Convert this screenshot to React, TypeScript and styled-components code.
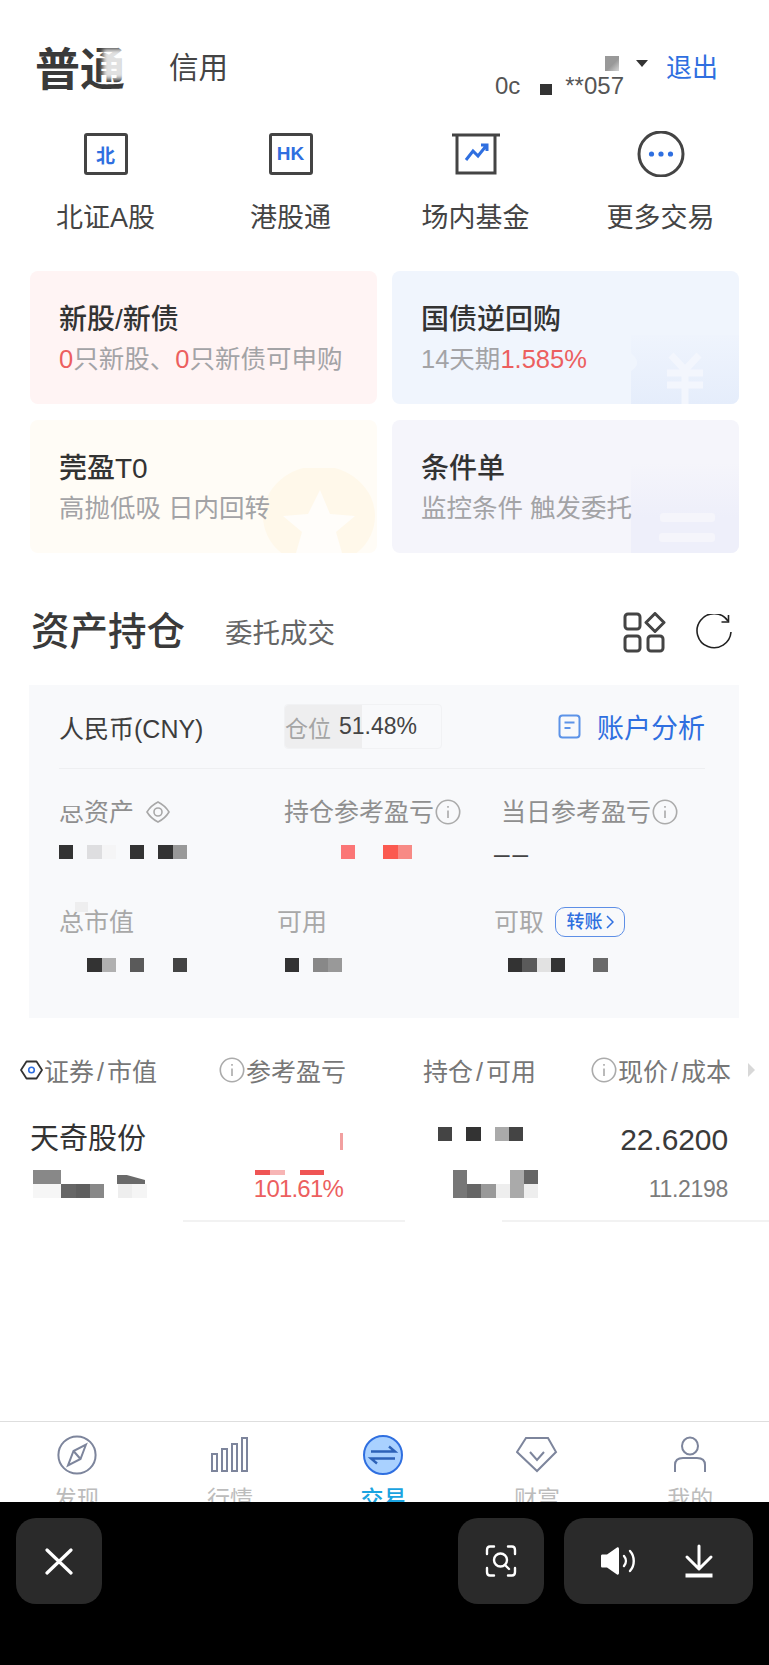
import styled, { createGlobalStyle } from "styled-components";

const GlobalStyle = createGlobalStyle`
  html, body {
    margin: 0;
    padding: 0;
    background: #fff;
  }
  body {
    font-family: "Liberation Sans", "Noto Sans CJK SC", sans-serif;
  }
`;

const Page = styled.div`
  width: 769px;
  height: 1665px;
  display: flex;
  flex-direction: column;
  overflow: hidden;
  background: #fff;
  color: #333;
`;

/* header */
const Header = styled.header`
  display: flex;
  align-items: flex-start;
  height: 131px;
  padding: 42px 51px 0 35px;
  box-sizing: border-box;
`;

const ActiveTab = styled.div`
  position: relative;
  margin-top: 3px;
  font-size: 45px;
  line-height: 52px;
  font-weight: 700;
  color: #3a3a3a;
`;

const TabSmudge = styled.span`
  position: absolute;
  left: 68px;
  top: 4px;
  width: 22px;
  height: 30px;
  background: rgba(255, 255, 255, 0.85);
  filter: blur(2px);
`;

const PlainTab = styled.div`
  margin-left: 44px;
  font-size: 29.5px;
  line-height: 52px;
  color: #444;
`;

const Account = styled.div`
  margin-left: auto;
  margin-top: 13px;
  display: flex;
  flex-direction: column;
  align-items: flex-end;
`;

const AccountName = styled.div`
  display: flex;
  align-items: center;
  gap: 17px;
  height: 16px;
`;

const NameMask = styled.span`
  width: 14px;
  height: 15px;
  background: linear-gradient(135deg, #999 55%, #d5d5d5);
`;

const Caret = styled.span`
  width: 0;
  height: 0;
  border-left: 6px solid transparent;
  border-right: 6px solid transparent;
  border-top: 7px solid #333;
`;

const AccountNo = styled.div`
  display: flex;
  align-items: center;
  margin: 4px 24px 0 0;
  font-size: 24px;
  line-height: 22px;
  color: #555;
`;

const NoMask = styled.span`
  width: 12px;
  height: 11px;
  margin: 6px 13px 0 20px;
  background: #333;
`;

const Logout = styled.div`
  margin-left: 18px;
  font-size: 26px;
  line-height: 52px;
  color: #2f6fe0;
`;

/* shortcuts */
const Shortcuts = styled.nav`
  display: grid;
  grid-template-columns: repeat(4, 185px);
  padding-left: 13px;
`;

const Shortcut = styled.div`
  display: flex;
  flex-direction: column;
  align-items: center;
`;

const IconSlot = styled.div`
  height: 46px;
  display: flex;
  align-items: center;
  justify-content: center;
`;

const BoxIcon = styled.div`
  width: 44px;
  height: 42px;
  box-sizing: border-box;
  border: 3px solid #444;
  border-radius: 3px;
  display: flex;
  align-items: center;
  justify-content: center;
  font-size: 19px;
  font-weight: 700;
  color: #2f6fe0;
`;

const ShortcutLabel = styled.div`
  margin-top: 26px;
  font-size: 27px;
  line-height: 30px;
  color: #444;
`;

/* entry cards */
const Cards = styled.section`
  display: grid;
  grid-template-columns: 347px 347px;
  grid-auto-rows: 133px;
  gap: 16px 15px;
  margin-top: 38px;
  padding-left: 30px;
`;

const Card = styled.div<{ $bg: string }>`
  position: relative;
  overflow: hidden;
  padding: 31px 0 0 29px;
  border-radius: 8px;
  background: ${(p) => p.$bg};
`;

const CardTitle = styled.div`
  position: relative;
  font-size: 28px;
  line-height: 36px;
  font-weight: 500;
  color: #333;
`;

const CardSub = styled.div`
  position: relative;
  margin-top: 4px;
  font-size: 25.5px;
  line-height: 34px;
  color: #a3a3a6;
`;

const Red = styled.span`
  color: #ec5f5f;
`;

const CardArt = styled.svg`
  position: absolute;
  right: 0;
  bottom: 0;
`;

/* holdings head */
const SectionHead = styled.div`
  display: flex;
  align-items: center;
  height: 48px;
  margin-top: 55px;
  padding: 0 36px 0 31px;
`;

const SectionTitle = styled.h2`
  margin: 0;
  font-size: 38.5px;
  line-height: 48px;
  font-weight: 500;
  color: #3a3a3a;
`;

const SectionLink = styled.div`
  margin: -2px 0 0 40px;
  font-size: 27.5px;
  color: #666;
`;

const SectionTools = styled.div`
  margin-left: auto;
  display: flex;
  align-items: center;
  gap: 29px;
`;

/* asset panel */
const Panel = styled.section`
  width: 710px;
  height: 333px;
  margin: 29px 0 0 29px;
  padding: 0 34px 0 30px;
  box-sizing: border-box;
  background: #f8f9fb;
`;

const PanelTop = styled.div`
  display: flex;
  align-items: center;
  height: 84px;
  border-bottom: 1px solid #eeeff1;
  box-sizing: border-box;
`;

const Currency = styled.div`
  width: 225px;
  font-size: 25px;
  color: #3d3d3d;
`;

const Position = styled.div`
  position: relative;
  width: 158px;
  height: 45px;
  box-sizing: border-box;
  border: 1px solid #f1f2f4;
  border-radius: 4px;
  display: flex;
  align-items: center;
  gap: 8px;
  font-size: 23px;
  color: #444;
`;

const PositionFill = styled.span`
  position: absolute;
  left: 0;
  top: 0;
  bottom: 0;
  border-radius: 4px 0 0 4px;
  background: #eeeeef;
`;

const PositionText = styled.span<{ $muted?: boolean }>`
  position: relative;
  color: ${(p) => (p.$muted ? "#a5a5a5" : "#444")};
`;

const Analysis = styled.div`
  margin-left: auto;
  display: flex;
  align-items: center;
  gap: 16px;
  font-size: 27px;
  color: #2f6fe0;
`;

const MetricRow = styled.div<{ $cols: string; $top: number }>`
  display: grid;
  grid-template-columns: ${(p) => p.$cols};
  margin-top: ${(p) => p.$top}px;
`;

const Metric = styled.div<{ $gap: number }>`
  display: flex;
  flex-direction: column;
  gap: ${(p) => p.$gap}px;
`;

const MetricLabel = styled.div<{ $light?: boolean }>`
  position: relative;
  display: flex;
  align-items: center;
  height: 30px;
  font-size: 25px;
  line-height: 30px;
  white-space: nowrap;
  color: ${(p) => (p.$light ? "#a8a8a8" : "#8f8f8f")};
`;

const LabelSmear = styled.span`
  position: absolute;
  left: 0;
  top: 0;
  width: 26px;
  height: 9px;
  background: #f8f9fb;
`;

const LabelMark = styled.span`
  position: absolute;
  left: 16px;
  top: -5px;
  width: 13px;
  height: 10px;
  background: #eeeeef;
`;

const Dash = styled.div`
  height: 14px;
  margin-left: -7px;
  font-size: 28px;
  line-height: 18px;
  letter-spacing: 3px;
  color: #444;
`;

const TransferTag = styled.span`
  display: flex;
  align-items: center;
  justify-content: center;
  gap: 3px;
  width: 70px;
  height: 30px;
  margin-left: 11px;
  box-sizing: border-box;
  border: 1.5px solid #5e8fe6;
  border-radius: 10px;
  font-size: 18px;
  font-weight: 500;
  color: #2f6fe0;
`;

/* pixelated privacy blocks */
const MosaicRow = styled.div<{ $offset?: number }>`
  display: flex;
  height: 14px;
  margin-left: ${(p) => p.$offset ?? 0}px;
`;

const MosaicCell = styled.span<{ $color: string }>`
  flex: none;
  width: 14.2px;
  height: 14px;
  background: ${(p) => p.$color};
`;

const Mosaic = ({ cells, offset }: { cells: string[]; offset?: number }) => (
  <MosaicRow $offset={offset}>
    {cells.map((c, i) => (
      <MosaicCell key={i} $color={c || "transparent"} />
    ))}
  </MosaicRow>
);

const MosaicWedge = styled.span`
  position: absolute;
  left: 87px;
  top: 5px;
  width: 28px;
  height: 9px;
  background: #6a6a6a;
  clip-path: polygon(0 0, 35% 0, 100% 55%, 100% 100%, 0 100%);
`;

/* holdings table */
const TableHead = styled.div`
  display: grid;
  grid-template-columns: 198px 205px 167px 158px 1fr;
  align-items: center;
  height: 40px;
  margin-top: 32px;
  padding-left: 20px;
  font-size: 25px;
  color: #777;
`;

const HeadCell = styled.div`
  display: flex;
  align-items: center;
  gap: 1px;
  white-space: nowrap;
`;

const HeadSlash = styled.span`
  margin: 0 3px;
`;

const MoreArrow = styled.span`
  width: 0;
  height: 0;
  border-top: 7px solid transparent;
  border-bottom: 7px solid transparent;
  border-left: 7px solid #d8d8d8;
`;

const HoldingRow = styled.div`
  display: grid;
  grid-template-columns: 188px 125px 247px 138px;
  margin-top: 28px;
  padding-left: 30px;
`;

const HoldingCell = styled.div<{ $right?: boolean }>`
  display: flex;
  flex-direction: column;
  align-items: ${(p) => (p.$right ? "flex-end" : "stretch")};
`;

const TopLine = styled.div<{ $up?: number; $down?: number }>`
  display: flex;
  align-items: center;
  height: 40px;
  box-sizing: border-box;
  padding-bottom: ${(p) => p.$up ?? 0}px;
  padding-top: ${(p) => p.$down ?? 0}px;
  margin-bottom: 12px;
`;

const BottomLine = styled.div`
  position: relative;
  height: 28px;
`;

const StockName = styled.div`
  font-size: 29px;
  color: #333;
`;

const PriceNow = styled.div`
  font-size: 30px;
  letter-spacing: -0.1px;
  color: #3a3a3a;
`;

const PriceCost = styled.div`
  font-size: 23px;
  line-height: 28px;
  padding-top: 5px;
  letter-spacing: -0.3px;
  color: #7c7c7c;
`;

const PnlPercent = styled.div`
  font-size: 24px;
  line-height: 28px;
  padding-top: 5px;
  letter-spacing: -0.8px;
  color: #ec5f5f;
`;

const PnlSliver = styled.span`
  align-self: flex-start;
  width: 3px;
  height: 17px;
  margin-top: 15px;
  background: #f2a0a0;
`;

const PnlBits = styled.div`
  position: absolute;
  right: 19px;
  top: 0;
  display: flex;
  gap: 15px;
`;

const PnlBit = styled.span<{ $w: number; $soft?: boolean }>`
  width: ${(p) => p.$w}px;
  height: 5px;
  background: ${(p) => (p.$soft ? "linear-gradient(90deg, #ef5555 50%, #f7b5b5 50%)" : "#ef5555")};
`;

const HoldingMosaic = styled.div`
  padding-left: 82px;
`;

const RowRule = styled.div`
  display: flex;
  gap: 97px;
  margin-top: 22px;
  padding-left: 183px;
`;

const RuleSegment = styled.span<{ $w: string }>`
  width: ${(p) => p.$w};
  height: 2px;
  background: #f2f2f2;
`;

/* tab bar */
const TabBar = styled.nav`
  margin-top: auto;
  display: grid;
  grid-template-columns: repeat(5, 1fr);
  height: 81px;
  box-sizing: border-box;
  padding-right: 2px;
  border-top: 1.5px solid #dedede;
  overflow: hidden;
`;

const TabItem = styled.div`
  display: flex;
  flex-direction: column;
  align-items: center;
  padding-top: 13px;
`;

const TabLabel = styled.div<{ $active?: boolean }>`
  margin-top: 9px;
  font-size: 23px;
  line-height: 30px;
  color: ${(p) => (p.$active ? "#1aa3e0" : "#bcbcbc")};
  font-weight: ${(p) => (p.$active ? 500 : 400)};
`;

/* black recorder strip */
const RecorderBar = styled.div`
  display: flex;
  height: 163px;
  flex: none;
  box-sizing: border-box;
  padding: 16px 16px 0;
  background: #000;
`;

const RecorderBtn = styled.div<{ $push?: boolean }>`
  width: 86px;
  height: 86px;
  margin-left: ${(p) => (p.$push ? "auto" : "0")};
  border-radius: 20px;
  background: #2a2a2a;
  display: flex;
  align-items: center;
  justify-content: center;
`;

const RecorderGroup = styled.div`
  width: 189px;
  height: 86px;
  margin-left: 20px;
  box-sizing: border-box;
  padding-left: 36px;
  border-radius: 20px;
  background: #2a2a2a;
  display: flex;
  align-items: center;
  gap: 48px;
`;

const InfoIcon = ({ size = 26 }: { size?: number }) => (
  <svg width={size} height={size} viewBox="0 0 24 24" fill="none" stroke="#ababab" strokeWidth="1.5" style={{ flex: "none", marginLeft: 1 }}>
    <circle cx="12" cy="12" r="10.8" />
    <path d="M12 10.5v7M12 6.5v1.6" />
  </svg>
);

const TabIcon = ({ children }: { children: React.ReactNode }) => (
  <svg width="42" height="40" viewBox="0 0 42 40" fill="none" stroke="#7d859c" strokeWidth="2">
    {children}
  </svg>
);

const tabs = [
  {
    label: "发现",
    icon: (
      <TabIcon>
        <circle cx="21" cy="20" r="18.6" />
        <path d="M30 9.5 24.5 24 12 30.5 17.5 16Z" />
        <path d="M17.5 16 24.5 24" />
      </TabIcon>
    ),
  },
  {
    label: "行情",
    icon: (
      <TabIcon>
        <rect x="3" y="19" width="5" height="17" />
        <rect x="13" y="14" width="5" height="22" />
        <rect x="23" y="9" width="5" height="27" />
        <rect x="33" y="3" width="5" height="33" />
      </TabIcon>
    ),
  },
  {
    label: "交易",
    active: true,
    icon: (
      <svg width="42" height="40" viewBox="0 0 42 40" fill="none">
        <circle cx="21" cy="20" r="19" fill="#a9d1ff" stroke="#2f6fe0" strokeWidth="2" />
        <path d="M9 16.5h24l-6-5M33 23.5H9l6 5" stroke="#2d62b8" strokeWidth="2.4" />
      </svg>
    ),
  },
  {
    label: "财富",
    icon: (
      <TabIcon>
        <path d="M10 3h22l8 14-19 19L1 17Z" />
        <path d="M14 17l7 8 7-8" />
      </TabIcon>
    ),
  },
  {
    label: "我的",
    icon: (
      <TabIcon>
        <ellipse cx="21" cy="11" rx="8" ry="8.5" />
        <path d="M6 37V30c0-5 3-7 8-7h14c5 0 8 2 8 7v7" />
      </TabIcon>
    ),
  },
];

const App = () => {
  return (
    <Page>
      <GlobalStyle />
      <Header>
        <ActiveTab>
          普通
          <TabSmudge />
        </ActiveTab>
        <PlainTab>信用</PlainTab>
        <Account>
          <AccountName>
            <NameMask />
            <Caret />
          </AccountName>
          <AccountNo>
            0c
            <NoMask />
            **057
          </AccountNo>
        </Account>
        <Logout>退出</Logout>
      </Header>

      <Shortcuts>
        <Shortcut>
          <IconSlot>
            <BoxIcon>北</BoxIcon>
          </IconSlot>
          <ShortcutLabel>北证A股</ShortcutLabel>
        </Shortcut>
        <Shortcut>
          <IconSlot>
            <BoxIcon>HK</BoxIcon>
          </IconSlot>
          <ShortcutLabel>港股通</ShortcutLabel>
        </Shortcut>
        <Shortcut>
          <IconSlot>
            <svg width="48" height="42" viewBox="0 0 48 42" fill="none">
              <path d="M0 2h48" stroke="#444" strokeWidth="3" />
              <path d="M5 2v38h38V2" stroke="#444" strokeWidth="3" />
              <path d="M14 27l7-9 5 5 8-10M29 12h6v6" stroke="#2f6fe0" strokeWidth="3" />
            </svg>
          </IconSlot>
          <ShortcutLabel>场内基金</ShortcutLabel>
        </Shortcut>
        <Shortcut>
          <IconSlot>
            <svg width="48" height="46" viewBox="0 0 48 46" fill="none">
              <circle cx="24" cy="23" r="22" stroke="#444" strokeWidth="3" />
              <circle cx="14.5" cy="23" r="2.6" fill="#2f6fe0" />
              <circle cx="24" cy="23" r="2.6" fill="#2f6fe0" />
              <circle cx="33.5" cy="23" r="2.6" fill="#2f6fe0" />
            </svg>
          </IconSlot>
          <ShortcutLabel>更多交易</ShortcutLabel>
        </Shortcut>
      </Shortcuts>

      <Cards>
        <Card $bg="#fff4f4">
          <CardTitle>新股/新债</CardTitle>
          <CardSub>
            <Red>0</Red>只新股、<Red>0</Red>只新债可申购
          </CardSub>
        </Card>
        <Card $bg="#f0f5fd">
          <CardArt width="108" height="69" viewBox="0 0 108 69">
            <defs>
              <linearGradient id="blueFade" x1="0" y1="0" x2="0" y2="1">
                <stop offset="0" stopColor="#eff4fd" />
                <stop offset="1" stopColor="#e5edfb" />
              </linearGradient>
            </defs>
            <path d="M0 69V36C6 32 8 28 4 22L0 18V0h108v69Z" fill="url(#blueFade)" />
            <path d="M40 20l14 15 14-15M36 38h36M36 50h36M54 35v34" stroke="#f3f6fd" strokeWidth="7" fill="none" />
          </CardArt>
          <CardTitle>国债逆回购</CardTitle>
          <CardSub>
            14天期<Red>1.585%</Red>
          </CardSub>
        </Card>
        <Card $bg="#fffcf6">
          <CardArt width="118" height="85" viewBox="0 0 118 85">
            <ellipse cx="60" cy="48" rx="56" ry="50" fill="#fff8ea" />
            <path d="M61 22l10 24 25 2-19 16 6 21H37l6-21-19-16 25-2Z" fill="#fffdfa" />
          </CardArt>
          <CardTitle>莞盈T0</CardTitle>
          <CardSub>高抛低吸 日内回转</CardSub>
        </Card>
        <Card $bg="#f5f5fb">
          <CardArt width="108" height="90" viewBox="0 0 108 90">
            <defs>
              <linearGradient id="greyFade" x1="0" y1="0" x2="0" y2="1">
                <stop offset="0" stopColor="#f5f5fb" />
                <stop offset="0.6" stopColor="#eeeffa" />
              </linearGradient>
            </defs>
            <rect width="108" height="90" fill="url(#greyFade)" />
            <rect x="29" y="50" width="55" height="9" rx="3" fill="#f5f5fb" />
            <rect x="28" y="70" width="56" height="9" rx="3" fill="#f5f5fb" />
          </CardArt>
          <CardTitle>条件单</CardTitle>
          <CardSub>监控条件 触发委托</CardSub>
        </Card>
      </Cards>

      <SectionHead>
        <SectionTitle>资产持仓</SectionTitle>
        <SectionLink>委托成交</SectionLink>
        <SectionTools>
          <svg width="43" height="41" viewBox="0 0 43 41" fill="none" stroke="#444" strokeWidth="3">
            <rect x="2" y="2" width="15" height="15" rx="3" />
            <path d="M32 1.5 41 10.500 32 19.500 23 10.500Z" strokeLinejoin="round" />
            <rect x="2" y="24" width="15" height="15" rx="3" />
            <rect x="25" y="24" width="15" height="15" rx="3" />
          </svg>
          <svg width="38" height="36" viewBox="0 0 38 36" fill="none" stroke="#222" strokeWidth="1.6">
            <path d="M33 7A17 17 0 1 0 36 18" />
            <path d="M33.500 1v7h-7" />
          </svg>
        </SectionTools>
      </SectionHead>

      <Panel>
        <PanelTop>
          <Currency>人民币(CNY)</Currency>
          <Position>
            <PositionFill style={{ width: `${51.48 * 1.5}px` }} />
            <PositionText $muted>仓位</PositionText>
            <PositionText>51.48%</PositionText>
          </Position>
          <Analysis>
            <svg width="23" height="25" viewBox="0 0 23 25" fill="none" stroke="#5c93e8" strokeWidth="2">
              <rect x="1.500" y="1.500" width="20" height="22" rx="3" />
              <path d="M6.500 8.500h10M6.500 14h6" />
            </svg>
            账户分析
          </Analysis>
        </PanelTop>

        <MetricRow $cols="225px 217px 1fr" $top={28}>
          <Metric $gap={18}>
            <MetricLabel>
              总资产
              <svg width="24" height="22" viewBox="0 0 24 22" fill="none" stroke="#a8a8a8" strokeWidth="1.6" style={{ marginLeft: 12 }}>
                <path d="M12 1C16 3 20 6 23 11 20 16 16 19 12 21 8 19 4 16 1 11 4 6 8 3 12 1Z" />
                <circle cx="12" cy="11" r="4" />
              </svg>
              <LabelSmear />
            </MetricLabel>
            <Mosaic cells={["#333", "", "#dedee0", "#f5f5f6", "", "#333", "", "#333", "#999"]} />
          </Metric>
          <Metric $gap={18}>
            <MetricLabel>
              持仓参考盈亏
              <InfoIcon />
            </MetricLabel>
            <Mosaic cells={["", "", "", "", "#fb7676", "", "", "#fb5a50", "#f78a85"]} />
          </Metric>
          <Metric $gap={18}>
            <MetricLabel>
              当日参考盈亏
              <InfoIcon />
            </MetricLabel>
            <Dash>––</Dash>
          </Metric>
        </MetricRow>

        <MetricRow $cols="218px 217px 1fr" $top={48}>
          <Metric $gap={21}>
            <MetricLabel $light>
              <LabelMark />
              总市值
            </MetricLabel>
            <Mosaic cells={["", "", "#333", "#b0b0b0", "", "#5a5a5a", "", "", "#444"]} />
          </Metric>
          <Metric $gap={21}>
            <MetricLabel $light>可用</MetricLabel>
            <Mosaic offset={8} cells={["#333", "", "#888", "#999"]} />
          </Metric>
          <Metric $gap={21}>
            <MetricLabel $light>
              可取
              <TransferTag>
                转账
                <svg width="8" height="14" viewBox="0 0 8 14" fill="none" stroke="#2f6fe0" strokeWidth="1.500">
                  <path d="M1 1l6 6-6 6" />
                </svg>
              </TransferTag>
            </MetricLabel>
            <Mosaic cells={["", "#333", "#5a5a5a", "#e2e2e2", "#333", "", "", "#6a6a6a"]} />
          </Metric>
        </MetricRow>
      </Panel>

      <TableHead>
        <HeadCell>
          <svg width="23" height="20" viewBox="0 0 23 20" fill="none">
            <path d="M6.500 1.500h10L22 10l-5.500 8.500h-10L1 10Z" stroke="#333" strokeWidth="1.800" strokeLinejoin="round" />
            <circle cx="11.500" cy="10" r="2.800" stroke="#2f6fe0" strokeWidth="1.600" />
          </svg>
          <span>
            证券<HeadSlash>/</HeadSlash>市值
          </span>
        </HeadCell>
        <HeadCell>
          <InfoIcon />
          参考盈亏
        </HeadCell>
        <HeadCell>
          <span>
            持仓<HeadSlash>/</HeadSlash>可用
          </span>
        </HeadCell>
        <HeadCell>
          <InfoIcon />
          <span>
            现价<HeadSlash>/</HeadSlash>成本
          </span>
        </HeadCell>
        <MoreArrow />
      </TableHead>

      <HoldingRow>
        <HoldingCell>
          <TopLine $up={4}>
            <StockName>天奇股份</StockName>
          </TopLine>
          <BottomLine>
            <Mosaic offset={3} cells={["#888", "#888"]} />
            <Mosaic offset={3} cells={["#f6f6f6", "#f6f6f6", "#666", "#5f5f5f", "#888", "", "#eee", "#f5f5f5"]} />
            <MosaicWedge />
          </BottomLine>
        </HoldingCell>
        <HoldingCell $right>
          <TopLine>
            <PnlSliver />
          </TopLine>
          <BottomLine>
            <PnlBits>
              <PnlBit $w={30} $soft />
              <PnlBit $w={24} />
            </PnlBits>
            <PnlPercent>101.61%</PnlPercent>
          </BottomLine>
        </HoldingCell>
        <HoldingMosaic>
          <TopLine $up={8}>
            <Mosaic offset={13} cells={["#444", "", "#333", "", "#aaa", "#444"]} />
          </TopLine>
          <BottomLine>
            <Mosaic offset={28} cells={["#777", "", "", "", "#aaa", "#666"]} />
            <Mosaic offset={28} cells={["#777", "#666", "#999", "#eee", "#aaa", "#eee"]} />
          </BottomLine>
        </HoldingMosaic>
        <HoldingCell $right>
          <TopLine $down={4}>
            <PriceNow>22.6200</PriceNow>
          </TopLine>
          <BottomLine>
            <PriceCost>11.2198</PriceCost>
          </BottomLine>
        </HoldingCell>
      </HoldingRow>
      <RowRule>
        <RuleSegment $w="222px" />
        <RuleSegment $w="267px" />
      </RowRule>

      <TabBar>
        {tabs.map((t) => (
          <TabItem key={t.label}>
            {t.icon}
            <TabLabel $active={t.active}>{t.label}</TabLabel>
          </TabItem>
        ))}
      </TabBar>

      <RecorderBar>
        <RecorderBtn>
          <svg width="28" height="27" viewBox="0 0 28 27" stroke="#fff" strokeWidth="3.200" strokeLinecap="round">
            <path d="M2 2l24 23M26 2 2 25" />
          </svg>
        </RecorderBtn>
        <RecorderBtn $push>
          <svg width="32" height="32" viewBox="0 0 32 32" fill="none" stroke="#fff" strokeWidth="2.400" strokeLinecap="round">
            <path d="M2 9V5c0-2 1-3.500 3-3.500h4M23 1.500h4c2 0 3 1.500 3 3.500v4M2 23v4c0 2 1 3.500 3 3.500h4M23 30.500h4c2 0 3-1.500 3-3.500v-4" />
            <circle cx="15.500" cy="15" r="6.500" />
            <path d="M20 20l4 4" />
          </svg>
        </RecorderBtn>
        <RecorderGroup>
          <svg width="36" height="28" viewBox="0 0 36 28" fill="none">
            <path d="M1 9c0-1 .5-1.500 1.500-1.500H7L17 .5c1-.5 2 0 2 1.500v24c0 1.500-1 2-2 1.500L7 20.500H2.500C1.500 20.500 1 20 1 19Z" fill="#fff" />
            <path d="M24 9c2.500 3 2.500 7 0 10M30 4c5 5.500 5 14.500 0 20" stroke="#fff" strokeWidth="2.400" strokeLinecap="round" />
          </svg>
          <svg width="30" height="34" viewBox="0 0 30 34" fill="none" stroke="#fff" strokeWidth="3" strokeLinecap="round" strokeLinejoin="round">
            <path d="M15 2v22M3 13l12 12 12-12" />
            <path d="M1.500 31.500h27" strokeWidth="4" strokeLinecap="butt" />
          </svg>
        </RecorderGroup>
      </RecorderBar>
    </Page>
  );
};

export default App;
